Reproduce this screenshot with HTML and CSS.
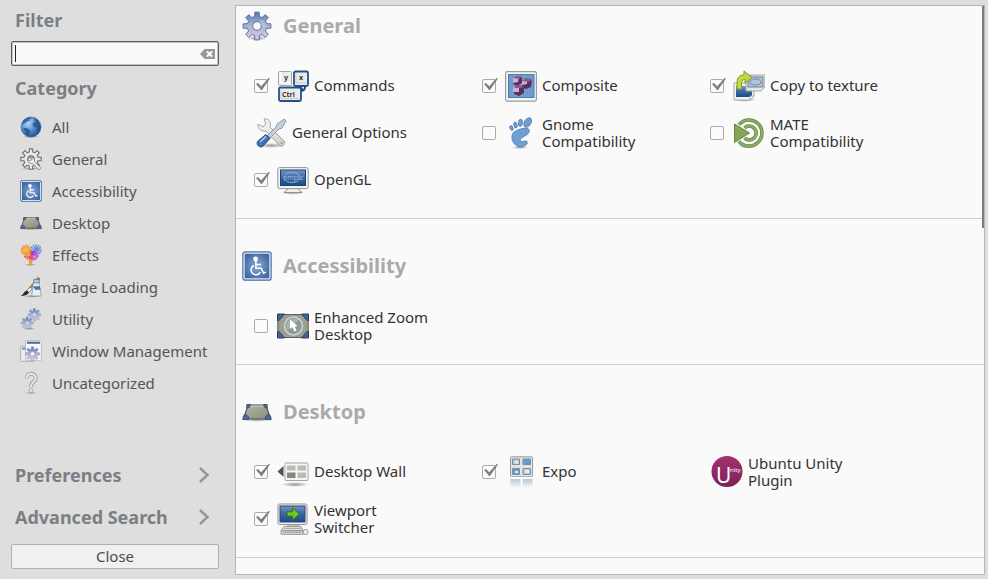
FILE: index.html
```html
<!DOCTYPE html>
<html lang="en">
<head>
<meta charset="utf-8">
<title>Settings Manager</title>
<link rel="stylesheet" href="styles.css">
</head>
<body>
<svg class="defs" aria-hidden="true">
  <defs>
    <linearGradient id="gearFill" x1="0" y1="0" x2="0" y2="1"><stop offset="0" stop-color="#5878ad"/><stop offset=".45" stop-color="#a3b1d3"/><stop offset="1" stop-color="#d8cfe6"/></linearGradient>
    <radialGradient id="blueTile"><stop offset="0" stop-color="#86abd9"/><stop offset="1" stop-color="#41699f"/></radialGradient>
    <radialGradient id="ocean" cx=".35" cy=".3" r=".75"><stop offset="0" stop-color="#b5d6f6"/><stop offset=".5" stop-color="#5c94d2"/><stop offset="1" stop-color="#204b87"/></radialGradient>
    <linearGradient id="floor" x1="0" y1="0" x2="1" y2="1"><stop offset="0" stop-color="#b9bba6"/><stop offset="1" stop-color="#85887a"/></linearGradient>
    <linearGradient id="screen" x1="0" y1="0" x2="0" y2="1"><stop offset="0" stop-color="#7795c3"/><stop offset=".5" stop-color="#3766a6"/><stop offset="1" stop-color="#204a87"/></linearGradient>
    <linearGradient id="metal" x1="0" y1="0" x2="1" y2="1"><stop offset="0" stop-color="#ffffff"/><stop offset="1" stop-color="#c9cac8"/></linearGradient>
    <linearGradient id="plum" x1="0" y1="0" x2="0" y2="1"><stop offset="0" stop-color="#a5306f"/><stop offset="1" stop-color="#7c2259"/></linearGradient>
    <linearGradient id="fade" x1="0" y1="0" x2="0" y2="1"><stop offset="0" stop-color="#8fa9c8" stop-opacity=".7"/><stop offset="1" stop-color="#8fa9c8" stop-opacity="0"/></linearGradient>
    <radialGradient id="shade"><stop offset="0" stop-color="#000" stop-opacity=".4"/><stop offset="1" stop-color="#000" stop-opacity="0"/></radialGradient>
    <path id="gearShape" fill-rule="evenodd" stroke-linejoin="round" d="M13.5 5.8 13.7 1.2H18.3L18.5 5.8 21.4 7 24.8 3.9 28.1 7.2 25 10.6 26.2 13.5 30.8 13.7V18.3L26.2 18.5 25 21.4 28.1 24.8 24.8 28.1 21.4 25 18.5 26.2 18.3 30.8H13.7L13.5 26.2 10.6 25 7.2 28.1 3.9 24.8 7 21.4 5.8 18.5 1.2 18.3V13.7L5.8 13.5 7 10.6 3.9 7.2 7.2 3.9 10.6 7ZM16 11.4A4.6 4.6 0 1 0 16 20.6 4.6 4.6 0 1 0 16 11.4Z"/>
  </defs>
  <symbol id="i-gear" viewBox="0 0 32 32">
    <ellipse cx="16" cy="29" rx="11" ry="3" fill="url(#shade)"/>
    <use href="#gearShape" fill="url(#gearFill)" stroke="#566799"/>
    <path d="M5 17C10 18 13 12 22 9L26 14 25 17 21 17A5.200 5.200 0 0 0 11 17Z" fill="#fff" opacity=".2"/>
  </symbol>
  <symbol id="i-globe" viewBox="0 0 32 32">
    <ellipse cx="16" cy="30" rx="13" ry="2" fill="url(#shade)"/>
    <circle cx="16" cy="16" r="14.500" fill="url(#ocean)" stroke="#35619b"/>
    <path d="M3 10C5 5 10 2 15 2L17 4 13 5 14 7 10 8 8 11 6 10 4 13ZM5 17 11 18 15 21 14 25 11 29 8 26 8 22 5 20ZM21 3C26 5 29 10 30 16L29 21 26 24 24 20 25 17 20 16 18 12 20 9 24 8 21 7Z" fill="#1f4c88" opacity=".75"/>
  </symbol>
  <symbol id="i-geargrey" viewBox="0 0 32 32">
    <ellipse cx="16" cy="30" rx="15" ry="2" fill="url(#shade)"/>
    <use href="#gearShape" fill="#e8e8e6" stroke="#6d6f6b" stroke-width="1.600"/>
    <path d="M14 14A5 5 0 0 1 21 20L30 29 28 32 18 22A5 5 0 0 1 11 17L15 19 18 16Z" fill="#f8f8f8" stroke="#777" stroke-width="1.200"/>
  </symbol>
  <symbol id="i-access" viewBox="0 0 32 32">
    <rect x="1" y="2" width="30" height="30" rx="2.500" fill="#999" opacity=".5"/>
    <rect x=".8" y=".8" width="30.400" height="30.400" rx="2.500" fill="url(#blueTile)" stroke="#5d82b6" stroke-width="1.200"/>
    <rect x="2.200" y="2.200" width="27.600" height="27.600" rx="1.500" fill="none" stroke="#dce8f6" stroke-width="1.400"/>
    <circle cx="14.500" cy="8.500" r="2.600" fill="#fff"/>
    <path d="M14.800 10V18.500H20.500L23 23.500 25.500 22.500M15 14.300H20.500M12.500 15.500A5.200 5.200 0 1 0 19.500 22.500" fill="none" stroke="#fff" stroke-width="1.600"/>
  </symbol>
  <symbol id="i-desktop" viewBox="0 0 32 32">
    <ellipse cx="16" cy="24.500" rx="16" ry="2" fill="url(#shade)"/>
    <path d="M6.500 8.500H25.500L30.500 23.500H1.500Z" fill="url(#floor)" stroke="#4d4f49" stroke-width="1.200"/>
    <path d="M7 9.700H25" stroke="#d3d4c5"/>
    <path d="M5 8H9L8 11 5 12ZM27 8H23L24 11 27 12ZM.8 24 1.500 20 4 18.500 7 21 7 24ZM31.200 24 30.500 20 28 18.500 25 21 25 24Z" fill="#4c689c" stroke="#263c66" stroke-width=".7"/>
  </symbol>
  <symbol id="i-effects" viewBox="0 0 32 32">
    <ellipse cx="15" cy="30" rx="9" ry="2" fill="url(#shade)"/>
    <path d="M13 14 15 30M19 17 15 30" stroke="#e9a02c" stroke-width="3"/>
    <g fill="none" stroke-width="5" stroke-dasharray="2 1"><circle cx="23" cy="9" r="6" stroke="#609de0"/><circle cx="20" cy="17" r="4.500" stroke="#cc3fc5"/><circle cx="12" cy="16" r="4" stroke="#f04d55"/><circle cx="9" cy="9" r="5.500" stroke="#f58a2c"/></g>
    <circle cx="9" cy="9" r="3.500" fill="#ffb43c"/><circle cx="20" cy="13" r="4" fill="#9547d2"/><circle cx="24" cy="8" r="3.500" fill="#6b83dc"/>
    <path d="M2 3 15 16M1 13 15 17M12 1 12 15" stroke="#f3b33a" stroke-width="1.300"/><path d="M30 3 20 15M31 11 18 18" stroke="#d06be0" stroke-width="1.200"/>
  </symbol>
  <symbol id="i-paint" viewBox="0 0 32 32">
    <ellipse cx="18" cy="29.500" rx="14" ry="2" fill="url(#shade)"/>
    <path d="M26 2 29 4 15 21 12 19Z" fill="#d7822d" stroke="#8d4f12"/>
    <path d="M15 16 18 19 11 25 8 23Z" fill="#eee" stroke="#666"/><path d="M10 21 13 24C11 28 6 29 1 29 5 27 5 23 10 21Z" fill="#262a2c"/>
    <path d="M20 7H28V13L31 29H17L19 13Z" fill="#e9eef5" stroke="#8b9097"/>
    <path d="M20 5H28V10H20Z" fill="#b4c9e5" stroke="#496fa5"/><path d="M19 15H29L30 20H22Z" fill="#3f75b8"/>
  </symbol>
  <symbol id="i-utility" viewBox="0 0 32 32">
    <ellipse cx="13" cy="30" rx="10" ry="2" fill="url(#shade)"/>
    <use href="#gearShape" transform="translate(11 0) scale(.62)" fill="url(#gearFill)" stroke="#8d98ba" stroke-width="1.200"/>
    <use href="#gearShape" transform="translate(1 12.500) scale(.59)" fill="url(#gearFill)" stroke="#8d98ba" stroke-width="1.200"/>
  </symbol>
  <symbol id="i-window" viewBox="0 0 32 32">
    <rect x="1" y="9" width="20" height="22" rx="1" fill="#eee" stroke="#999"/><path d="M3 12.500H11" stroke="#6d8fc0" stroke-width="3"/>
    <rect x="8" y="1" width="23" height="29" rx="1" fill="#f8f8f8" stroke="#aaa"/><path d="M10 4H29" stroke="#3f6cae" stroke-width="3"/>
    <use href="#gearShape" transform="translate(7 9) scale(.7)" fill="url(#gearFill)" stroke="#8790b3"/>
  </symbol>
  <symbol id="i-question" viewBox="0 0 32 32">
    <ellipse cx="16" cy="30.500" rx="10" ry="1.500" fill="url(#shade)"/>
    <path d="M9.500 9C9.500 0 23 1 23 9 23 14 16 14 16 22" fill="none" stroke="#9b9d99" stroke-width="5.500"/>
    <path d="M9.500 9C9.500 0 23 1 23 9 23 14 16 14 16 22" fill="none" stroke="#e6e6e4" stroke-width="3.300"/>
    <circle cx="16" cy="27" r="2.800" fill="#e6e6e4" stroke="#9b9d99"/>
  </symbol>
  <symbol id="i-composite" viewBox="0 0 32 32">
    <rect x=".6" y="1.600" width="30.800" height="29.500" rx="1.800" fill="#f5f5f4" stroke="#9a9c98" stroke-width="1.200"/>
    <rect x="3.500" y="4.500" width="25.500" height="23" fill="#6e9ccc" stroke="#4c79ad"/>
    <path d="M8 8 12 6 17 7 17 13 12 16 8 14ZM17 11 22 8 27 10 26 17 21 19 17 17ZM8 18 13 15 19 17 19 23 14 26 9 24Z" fill="#5c2f62"/>
    <path d="M8 8 14 7 13 12 8 13ZM17 11 22 10 22 14 17 15ZM8 17 14 17 14 22 8 22Z" fill="#cfb0cf"/>
    <path d="M12 6 17 7 14 9 9 8ZM22 8 27 10 23 12 18 11ZM13 15 19 17 15 18 9 18Z" fill="#8d5a8f"/>
  </symbol>
  <symbol id="i-copytex" viewBox="0 0 32 32">
    <ellipse cx="12" cy="29.500" rx="11" ry="2.500" fill="url(#shade)"/>
    <path d="M1 13H21V26L17 30H1Z" fill="#f2f2f0" stroke="#a8aaa6"/><rect x="3" y="16" width="16" height="11" fill="url(#screen)"/><path d="M17 30V26H21Z" fill="#fff" stroke="#aaa"/>
    <path d="M13 5H32V17L28 21H13Z" fill="#e5e5e3" stroke="#a8aaa6"/><rect x="15" y="7" width="15" height="10" fill="#b5c3d2" stroke="#738293"/><ellipse cx="22.500" cy="12" rx="5.500" ry="3" fill="none" stroke="#809ebd" stroke-width="1.500"/>
    <path d="M4 19V13C4 7 7 5 11 5V1L19 7.500 12 13V9.500C9 9.500 8.500 11 8.500 14V19Z" fill="#bfdb42" stroke="#819f1c"/>
  </symbol>
  <symbol id="i-tools" viewBox="0 0 32 32">
    <ellipse cx="16" cy="28.500" rx="14" ry="2.500" fill="url(#shade)"/>
    <path d="M3 7 8 10 11 7 9 2C13 1 17 5 15 10L29 24C31 27 27 31 24 28L11 14C7 15 2 12 3 7Z" fill="url(#metal)" stroke="#a0a29f"/><circle cx="26.500" cy="26" r="1" fill="#999"/>
    <path d="M29.500 2 31 4 27 11 24 12 15 21 12.500 18.500 21 10 22 7Z" fill="#c4cfdc" stroke="#8d99a8"/>
    <path d="M11 17.500 15 21.500 8 29C5 32 0 27 3 24Z" fill="#3f75b8" stroke="#204a87"/><path d="M5 25 11 19.500" stroke="#b5cfee" stroke-width="1.500"/>
  </symbol>
  <symbol id="i-gnome" viewBox="0 0 32 32">
    <ellipse cx="15" cy="30.500" rx="9" ry="1.500" fill="url(#shade)"/>
    <g fill="#719fcf" stroke="#4379b5" stroke-width=".8"><ellipse cx="22.700" cy="5.500" rx="3.200" ry="5.200" transform="rotate(32 22.700 5.500)"/><ellipse cx="15.400" cy="5.800" rx="2" ry="3.600" transform="rotate(6 15.400 5.800)"/><ellipse cx="10.500" cy="8" rx="1.600" ry="3" transform="rotate(-12 10.500 8)"/><ellipse cx="6.500" cy="11" rx="1.500" ry="2.500" transform="rotate(-25 6.500 11)"/>
    <path d="M24 12.500C23 9.500 12 12 8.500 15.500 5 20 7.500 27 13 29.500 19 31 23.500 27 22 24.500 20.500 23 18.500 25 16.500 24.500 14.500 23.500 15 21.500 18 20 22 18 25 16 24 12.500Z"/></g>
  </symbol>
  <symbol id="i-mate" viewBox="0 0 32 32">
    <ellipse cx="15" cy="29.500" rx="10" ry="2" fill="url(#shade)"/>
    <g fill="none" stroke="#668344" stroke-width="3.600"><path d="M6 7.700A13 13 0 1 1 6 24.300"/><path d="M11.500 10.800A7 7 0 1 1 11.500 21.200"/></g>
    <g fill="none" stroke="#8aae62" stroke-width="2.200"><path d="M6 7.700A13 13 0 1 1 6 24.300"/><path d="M11.500 10.800A7 7 0 1 1 11.500 21.200"/></g>
    <path d="M1.500 7 16.500 16 1.500 25.500Z" fill="#87a556" stroke="#668344"/>
  </symbol>
  <symbol id="i-zoom" viewBox="0 0 32 32">
    <rect x=".8" y="4.500" width="30.400" height="23" fill="#9d9e8b" stroke="#5b5d55"/>
    <path d="M.5 4H7.500L2 10.500H.5ZM31.500 4H24.500L30 10.500H31.500ZM.5 28H7.500L2 21.500H.5ZM31.500 28H24.500L30 21.500H31.500Z" fill="#486392" stroke="#273e68"/>
    <circle cx="16.500" cy="16" r="9" fill="#8e9a99" stroke="#c6d3d8" stroke-width="1.600"/><path d="M9 15C12 9 17 7 22 10L10 20Z" fill="#fff" opacity=".25"/>
    <path d="M13 9.500V19L15.300 17.200 17.500 21.500 19.500 20.500 17.800 16.500 20.500 16Z" fill="#fff"/>
  </symbol>
  <symbol id="i-wall" viewBox="0 0 32 32">
    <ellipse cx="18" cy="28.500" rx="14" ry="2.500" fill="url(#shade)"/>
    <path d="M.5 15.500 6.500 10V21Z" fill="#50534e"/><rect x="8" y="7" width="23" height="17.500" rx="1" fill="#f6f6f4" stroke="#a5a7a2"/>
    <path d="M10 9.500H18.500V14.500H10ZM20.500 9.500H29V14.500H20.500ZM20.500 16.500H29V22H20.500Z" fill="#b9bab6"/><path d="M10 16.500H18.500V22H10Z" fill="#858783"/>
  </symbol>
  <symbol id="i-expo" viewBox="0 0 32 32">
    <rect x="5.500" y=".8" width="22" height="20" rx="1" fill="#e3e3e1" stroke="#9a9c98"/>
    <g stroke="#7b8da3"><path d="M7.500 3H14.500V8.500H7.500ZM18 12.500H25.500V18.500H18Z" fill="#b8c9dc"/><path d="M18 3H25.500V8.500H18ZM7.500 12.500H14.500V18.500H7.500Z" fill="#679bd0"/></g><path d="M10 5H13V7.500H10ZM10 15H13V17H10ZM20 14H24V17H20Z" fill="#ececec"/>
    <rect x="5.500" y="22" width="22" height="10" fill="url(#fade)"/><path d="M16.500 22V31M6 22H27" stroke="#fff" stroke-width="2"/>
  </symbol>
  <symbol id="i-viewport" viewBox="0 0 32 32">
    <ellipse cx="16" cy="31" rx="15" ry="1.500" fill="url(#shade)"/>
    <path d="M11 20H21V25H11Z" fill="#c9cac7" stroke="#888"/><rect x="1" y="1" width="29" height="20.500" rx="1.500" fill="#f2f2f0" stroke="#92948f"/><rect x="3" y="3" width="25" height="16" fill="url(#screen)" stroke="#27477a"/>
    <path d="M10 8.800H15.500V5L22.500 11 15.500 17V13.200H10Z" fill="#73c52b" stroke="#327405"/>
    <path d="M7 23.500H24L26 27.500H4ZM4 28H26V31.300H4Z" fill="#e0e0de" stroke="#999b97"/><path d="M7 25.500H24M6 29.500H24" stroke="#aaa"/><ellipse cx="28.700" cy="29" rx="2.500" ry="2.600" fill="#eee" stroke="#999"/>
  </symbol>
</svg>

<div class="window">
  <aside class="sidebar">
    <label class="side-title" for="filter">Filter</label>
    <div class="search">
      <input id="filter" type="text">
      <button class="clear" type="button" aria-label="Clear"><svg viewBox="0 0 15 10"><path d="M0 5 4.500 0H15V10H4.500Z" fill="#9698a2"/><path d="M7 2.500 12 7.500M12 2.500 7 7.500" stroke="#fff" stroke-width="2"/></svg></button>
    </div>
    <h2 class="side-title category-title">Category</h2>
    <nav class="categories">
      <a href="#all"><svg><use href="#i-globe"/></svg>All</a>
      <a href="#general"><svg><use href="#i-geargrey"/></svg>General</a>
      <a href="#accessibility"><svg><use href="#i-access"/></svg>Accessibility</a>
      <a href="#desktop"><svg><use href="#i-desktop"/></svg>Desktop</a>
      <a href="#effects"><svg><use href="#i-effects"/></svg>Effects</a>
      <a href="#image"><svg><use href="#i-paint"/></svg>Image Loading</a>
      <a href="#utility"><svg><use href="#i-utility"/></svg>Utility</a>
      <a href="#window"><svg><use href="#i-window"/></svg>Window Management</a>
      <a href="#uncategorized"><svg><use href="#i-question"/></svg>Uncategorized</a>
    </nav>
    <div class="side-actions">
      <button class="side-title page-link" type="button">Preferences<svg viewBox="0 0 10 16"><path d="M1 1 8.500 8 1 15"/></svg></button>
      <button class="side-title page-link" type="button">Advanced Search<svg viewBox="0 0 10 16"><path d="M1 1 8.500 8 1 15"/></svg></button>
      <button class="close" type="button">Close</button>
    </div>
  </aside>

  <main class="panel">
    <section id="general">
      <h2><svg><use href="#i-gear"/></svg>General</h2>
      <div class="plugins">
        <label class="plugin"><input type="checkbox" checked>
          <svg viewBox="0 0 32 32">
            <path d="M28 15V17.500A4 4 0 0 1 24 21M23 17 26 20" fill="none" stroke="#204a87" stroke-width="2"/>
            <rect x="1.500" y="1.500" width="13" height="14" rx="1" fill="#ecece8" stroke="#a5a6a1"/><path d="M3.500 2V12.500H14" fill="none" stroke="#fff" stroke-width="1.500"/>
            <rect x="17" y="1.500" width="14" height="14.500" rx="1.500" fill="#ecece8" stroke="#23508d" stroke-width="1.800"/>
            <rect x="2" y="17.500" width="22" height="13.500" rx="1.500" fill="#ecece8" stroke="#23508d" stroke-width="1.800"/>
            <path d="M19 3.500V13H29.500M4 19.500V28.500H22.500" fill="none" stroke="#c9cac4"/>
            <g class="keycap"><text x="7" y="10">y</text><text x="22" y="10">x</text><text x="5" y="27">Ctrl</text></g>
          </svg>
          <span>Commands</span></label>
        <label class="plugin"><input type="checkbox" checked><svg><use href="#i-composite"/></svg><span>Composite</span></label>
        <label class="plugin"><input type="checkbox" checked><svg><use href="#i-copytex"/></svg><span>Copy to texture</span></label>
        <button class="plugin fixed" type="button"><svg><use href="#i-tools"/></svg><span>General Options</span></button>
        <label class="plugin"><input type="checkbox"><svg><use href="#i-gnome"/></svg><span>Gnome Compatibility</span></label>
        <label class="plugin"><input type="checkbox"><svg><use href="#i-mate"/></svg><span>MATE Compatibility</span></label>
        <label class="plugin"><input type="checkbox" checked>
          <svg viewBox="0 0 32 32">
            <ellipse cx="16" cy="28.500" rx="12" ry="2.500" fill="url(#shade)"/>
            <path d="M11 24H21L22 26 25 28.500H7L10 26Z" fill="#ededeb" stroke="#90928f"/>
            <rect x=".8" y="3.600" width="30.400" height="21" rx="1.800" fill="#f3f3f1" stroke="#92948f"/>
            <rect x="3.500" y="6" width="25" height="15.500" fill="url(#screen)" stroke="#1c427a"/>
            <ellipse cx="15" cy="13.500" rx="8" ry="5" fill="none" stroke="#8ea9cf"/><text class="screen-word" x="6" y="16">ompiz</text>
          </svg>
          <span>OpenGL</span></label>
      </div>
    </section>
    <section id="accessibility">
      <h2><svg><use href="#i-access"/></svg>Accessibility</h2>
      <div class="plugins">
        <label class="plugin"><input type="checkbox"><svg><use href="#i-zoom"/></svg><span>Enhanced Zoom Desktop</span></label>
      </div>
    </section>
    <section id="desktop">
      <h2><svg><use href="#i-desktop"/></svg>Desktop</h2>
      <div class="plugins">
        <label class="plugin"><input type="checkbox" checked><svg><use href="#i-wall"/></svg><span>Desktop Wall</span></label>
        <label class="plugin"><input type="checkbox" checked><svg><use href="#i-expo"/></svg><span>Expo</span></label>
        <button class="plugin fixed" type="button">
          <svg viewBox="0 0 32 32"><circle cx="16" cy="15.500" r="15.500" fill="url(#plum)"/><g fill="#fff"><text class="unity-u" x="5" y="27">U</text><text class="unity-rest" x="19" y="16">nity</text></g></svg>
          <span>Ubuntu Unity Plugin</span></button>
        <label class="plugin"><input type="checkbox" checked><svg><use href="#i-viewport"/></svg><span>Viewport Switcher</span></label>
      </div>
    </section>
    <div class="scroll-thumb"></div>
  </main>
</div>
</body>
</html>
```
FILE: styles.css
```css
* { box-sizing: border-box; }

body {
  margin: 0;
  background: #dedede;
  color: #333;
  font: 15px/17px "Noto Sans", "Open Sans", sans-serif;
}

button { padding: 0; border: 0; background: none; color: inherit; font: inherit; text-align: left; }
svg { flex: none; display: block; }
.defs { position: absolute; width: 0; height: 0; }

.window { display: grid; grid-template-columns: 235px 1fr; height: 100vh; }

/* Sidebar */
.sidebar { display: flex; flex-direction: column; padding: 8px 16px 10px 11px; color: #555; }
.side-title { margin: 0; padding: 0 4px; color: #7b7f84; font-size: 18px; font-weight: 700; line-height: 24px; }
.search { display: flex; align-items: center; height: 25px; margin-top: 9px; border: 1px solid #5e5e5e; border-radius: 2px; background: #fafafa; box-shadow: inset 0 0 0 1px #c4c4c4; }
/* Text caret */
.search::before { content: ""; width: 1px; height: 17px; margin-left: 3px; background: #222; }
.search input { flex: 1; min-width: 0; height: 23px; padding: 0 3px 0 0; border: 0; outline: 0; background: none; color: #222; font: inherit; }
.clear { width: 15px; margin-right: 3px; }
.clear svg { width: 15px; height: 10px; }
.category-title { margin-top: 10px; }
.categories { display: flex; flex-direction: column; margin-top: 11px; }
.categories a { display: flex; align-items: center; gap: 10px; height: 32px; padding-left: 9px; color: inherit; text-decoration: none; white-space: nowrap; }
.categories svg { width: 22px; height: 22px; }
.side-actions { display: flex; flex-direction: column; margin-top: auto; }
.page-link { display: flex; justify-content: space-between; align-items: center; height: 42px; padding-right: 10px; white-space: nowrap; }
.page-link svg { width: 10px; height: 16px; fill: none; stroke: #94969f; stroke-width: 2.5; }
.close { height: 25px; margin-top: 6px; border: 1px solid #b0b0b0; border-radius: 2px; background: #f0f0f0; color: #4c4c4c; text-align: center; }

/* Plugin list */
.panel { position: relative; margin: 5px 3px 4px 0; border: 1px solid #b4b4b4; background: #fafafa; overflow: hidden; }
.panel section { padding: 31px 0 15px; border-bottom: 1px solid #cfcfcf; }
.panel section:first-child { padding-top: 4px; }
.panel h2 { display: flex; align-items: center; gap: 11px; height: 32px; margin: 0 0 20px; padding-left: 6px; color: #aaa; font-size: 20px; line-height: 28px; }
.panel h2 svg { width: 30px; height: 30px; }
.plugins { display: grid; grid-template-columns: repeat(3, 228px); grid-auto-rows: 47px; padding-left: 18px; }
.plugin { display: flex; align-items: center; }
.plugin svg { width: 32px; height: 32px; margin-right: 5px; }
.plugin span { max-width: 116px; }
.plugin.fixed { padding-left: 1px; }
.plugin input { position: relative; flex: none; appearance: none; width: 14px; height: 14px; margin: 0 9px 0 0; border: 1px solid #aaa; border-radius: 2px; background: #fbfbfb; }
.plugin input:checked::before { content: ""; position: absolute; left: 1px; top: -2px; width: 14px; height: 13px; background: #7b7f83; clip-path: polygon(0 50%, 14% 42%, 37% 68%, 90% 4%, 100% 8%, 40% 100%); }

.scroll-thumb { position: absolute; top: 0; right: 0; width: 2px; height: 39%; background: #7a7e82; }

.keycap text { fill: #333; font: bold 7px "Noto Sans", sans-serif; }
.screen-word { fill: #9fb6d8; font: 7px "Noto Sans", sans-serif; }
.unity-u { font: 21px "Noto Sans", sans-serif; }
.unity-rest { font: 6px "Noto Sans", sans-serif; }
```
